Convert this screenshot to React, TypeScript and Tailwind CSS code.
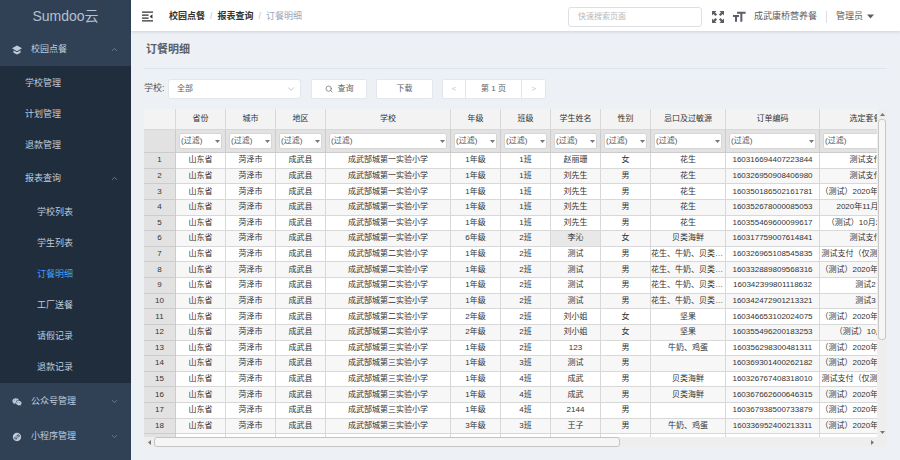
import { useState } from 'react';
import clsx from 'clsx';
import { ChevronDown, ChevronUp, Search } from 'lucide-react';
import { MdFormatSize } from 'react-icons/md';
import { RiMiniProgramFill, RiWechatFill } from 'react-icons/ri';

const managementLinks = ['学校管理', '计划管理', '退款管理'];
const reportLinks = ['学校列表', '学生列表', '订餐明细', '工厂送餐', '请假记录', '退款记录'];

const columns = [
  { label: '省份', width: 'w-[50px]' },
  { label: '城市', width: 'w-[50px]' },
  { label: '地区', width: 'w-[50px]' },
  { label: '学校', width: 'w-[125px]' },
  { label: '年级', width: 'w-[50px]' },
  { label: '班级', width: 'w-[50px]' },
  { label: '学生姓名', width: 'w-[50px]' },
  { label: '性别', width: 'w-[50px]' },
  { label: '忌口及过敏源', width: 'w-[75px]' },
  { label: '订单编码', width: 'w-[94px]' },
  { label: '选定套餐', width: 'w-[92px]' },
];

const FIRST = '成武郜城第一实验小学';
const SECOND = '成武郜城第二实验小学';
const THIRD = '成武郜城第三实验小学';

// school, grade, class, student, gender, allergens, order number, meal
const orders = [
  [FIRST, '1年级', '1班', '赵丽珊', '女', '花生', '160316694407223844', '测试支付'],
  [FIRST, '1年级', '1班', '刘先生', '男', '花生', '160326950908406980', '测试支付'],
  [FIRST, '1年级', '1班', '刘先生', '男', '花生', '160350186502161781', '（测试）2020年11月套餐'],
  [FIRST, '1年级', '1班', '刘先生', '男', '花生', '160352678000085053', '2020年11月套餐'],
  [FIRST, '1年级', '1班', '刘先生', '男', '花生', '160355469600099617', '（测试）10月2日套餐'],
  [FIRST, '6年级', '2班', '李沁', '女', '贝类海鲜', '160317759007614841', '测试支付'],
  [SECOND, '1年级', '2班', '测试', '男', '花生、牛奶、贝类海鲜', '160326965108545835', '测试支付（仅测试使用）'],
  [SECOND, '1年级', '2班', '测试', '男', '花生、牛奶、贝类海鲜', '160332889809568316', '（测试）2020年11月套餐'],
  [SECOND, '1年级', '2班', '测试', '男', '花生、牛奶、贝类海鲜', '160342399801118632', '测试2'],
  [SECOND, '1年级', '2班', '测试', '男', '花生、牛奶、贝类海鲜', '160342472901213321', '测试3'],
  [SECOND, '2年级', '2班', '刘小姐', '女', '坚果', '160346653102024075', '（测试）2020年11月套餐'],
  [SECOND, '2年级', '2班', '刘小姐', '女', '坚果', '160355496200183253', '（测试）10月2日'],
  [THIRD, '1年级', '2班', '123', '男', '牛奶、鸡蛋', '160356298300481311', '（测试）2020年11月套餐'],
  [THIRD, '1年级', '3班', '测试', '男', '', '160369301400262182', '（测试）2020年11月套餐'],
  [THIRD, '1年级', '4班', '成武', '男', '贝类海鲜', '160326767408318010', '测试支付（仅测试使用）'],
  [THIRD, '1年级', '4班', '成武', '男', '贝类海鲜', '160367662600646315', '（测试）2020年11月套餐'],
  [THIRD, '1年级', '4班', '2144', '男', '', '160367938500733879', '（测试）2020年11月套餐'],
  [THIRD, '3年级', '3班', '王子', '男', '牛奶、鸡蛋', '160336952400213311', '（测试）2020年11月套餐'],
];

function SchoolIcon() {
  return (
    <svg viewBox="0 0 20 20" className="size-[10px]" fill="currentColor" aria-hidden="true">
      <path d="M10 1 0 6.500l10 6 10-6z" />
      <path d="M3 10.500v5l7 3.500 7-3.500v-5l-7 4z" />
    </svg>
  );
}

function FoldIcon() {
  return (
    <svg viewBox="0 0 20 20" className="size-[11px]" fill="currentColor" aria-hidden="true">
      <path d="M0 1h20v2H0zM0 6.500h12v2H0zM0 12h12v2H0zM0 17h20v2H0zM19 6v8l-5-4z" />
    </svg>
  );
}

function FullscreenIcon() {
  return (
    <svg viewBox="0 0 24 24" className="size-3" fill="currentColor" aria-hidden="true">
      <path d="M0 0h9L6.200 2.800l4 4-3.400 3.400-4-4L0 9z" />
      <path d="M24 0v9l-2.800-2.800-4 4-3.400-3.400 4-4L15 0z" />
      <path d="M0 24v-9l2.800 2.800 4-4 3.400 3.400-4 4L9 24z" />
      <path d="M24 24h-9l2.800-2.800-4-4 3.400-3.400 4 4L24 15z" />
    </svg>
  );
}

function Caret({ className }: { className?: string }) {
  return (
    <svg viewBox="0 0 10 6" className={className} fill="currentColor" aria-hidden="true">
      <path d="M0 0h10L5 6z" />
    </svg>
  );
}

function Sidebar({ active, onSelect }: { active: string; onSelect: (name: string) => void }) {
  const topItem = 'flex h-[35px] w-full items-center px-3 pt-[2px] text-left';
  const link = 'flex h-[31px] items-center pt-[2px]';

  return (
    <aside className="w-[131px] shrink-0 bg-[#304156] text-[9px] text-[#bfcbd9]">
      <div className="flex h-[31px] items-center justify-center text-sm text-[#b4c0cf]">Sumdoo云</div>
      <nav>
        <button type="button" className={topItem}>
          <SchoolIcon />
          <span className="ml-[9px] flex-1">校园点餐</span>
          <ChevronUp className="size-[9px] text-[#7d8998]" strokeWidth={2} />
        </button>
        <div className="bg-[#1f2d3d]">
          <ul className="pt-px">
            {managementLinks.map((name) => (
              <li key={name}>
                <a href="#" className={clsx(link, 'pl-[25px]')}>{name}</a>
              </li>
            ))}
          </ul>
          <button type="button" className="flex h-[35px] w-full items-center pl-[25px] pr-3 pt-[2px] text-left">
            <span className="flex-1">报表查询</span>
            <ChevronUp className="size-[9px] text-[#7d8998]" strokeWidth={2} />
          </button>
          <ul className="py-px">
            {reportLinks.map((name) => (
              <li key={name}>
                <a
                  href="#"
                  onClick={() => onSelect(name)}
                  className={clsx(link, 'pl-[37px]', name === active && 'text-[#409eff]')}
                >
                  {name}
                </a>
              </li>
            ))}
          </ul>
        </div>
        <button type="button" className={topItem}>
          <RiWechatFill className="size-[10px]" />
          <span className="ml-[9px] flex-1">公众号管理</span>
          <ChevronDown className="size-[9px] text-[#7d8998]" strokeWidth={2} />
        </button>
        <button type="button" className={topItem}>
          <RiMiniProgramFill className="size-[10px]" />
          <span className="ml-[9px] flex-1">小程序管理</span>
          <ChevronDown className="size-[9px] text-[#7d8998]" strokeWidth={2} />
        </button>
      </nav>
    </aside>
  );
}

function Header() {
  return (
    <header className="flex h-[31px] items-center bg-white pl-[11px] pr-[26px] pt-[2px] text-[9px] text-[#5a5e66] shadow-[0_1px_3px_rgba(0,21,41,0.14)]">
      <button type="button" aria-label="折叠菜单" className="text-[#303133]">
        <FoldIcon />
      </button>
      <nav className="ml-4 flex flex-1 items-center gap-[5px]">
        <a href="#" className="font-bold text-[#303133]">校园点餐</a>
        <span className="text-[#c0c4cc]">/</span>
        <a href="#" className="font-bold text-[#303133]">报表查询</a>
        <span className="text-[#c0c4cc]">/</span>
        <span className="text-[#97a8be]">订餐明细</span>
      </nav>
      <input
        type="search"
        aria-label="快速搜索页面"
        placeholder="快速搜索页面"
        className="h-5 w-[134px] rounded-[3px] border border-[#dcdfe6] px-[9px] text-[8px] outline-none placeholder:text-[#b4b8c0]"
      />
      <button type="button" aria-label="全屏" className="ml-[10px]">
        <FullscreenIcon />
      </button>
      <button type="button" aria-label="字号" className="ml-[7px]">
        <MdFormatSize className="size-4" />
      </button>
      <span className="ml-[7px]">成武康桥营养餐</span>
      <span className="ml-[9px] h-3 w-px bg-[#dcdfe6]" />
      <button type="button" className="ml-[9px] flex items-center gap-1">
        管理员
        <Caret className="h-[5px] w-[7px]" />
      </button>
    </header>
  );
}

function Toolbar() {
  const button = 'flex h-5 items-center justify-center border border-[#e3e6ec] bg-white text-[8px] text-[#606266]';

  return (
    <div className="flex items-center text-[8px]">
      <label htmlFor="school" className="w-6 whitespace-nowrap text-[9px] text-[#505358]">学校:</label>
      <div className="relative">
        <select
          id="school"
          className="h-5 w-[133px] appearance-none rounded-[3px] border border-[#e3e6ec] bg-white px-2 text-[#606266]"
        >
          <option>全部</option>
        </select>
        <ChevronDown className="pointer-events-none absolute right-[5px] top-[5px] size-[10px] text-[#b4b8c0]" />
      </div>
      <button type="button" className={clsx(button, 'ml-[10px] w-14 gap-[5px] rounded-[2px]')}>
        <Search className="size-2" />
        查询
      </button>
      <button type="button" className={clsx(button, 'ml-[9px] w-[57px] rounded-[2px]')}>下载</button>
      <div className="ml-[9px] flex">
        <button type="button" disabled className={clsx(button, 'w-6 rounded-l-[2px] text-[#c0c4cc]!')}>&lt;</button>
        <button type="button" className={clsx(button, '-ml-px w-[57px]')}>第 1 页</button>
        <button type="button" disabled className={clsx(button, '-ml-px w-[25px] rounded-r-[2px] text-[#c0c4cc]!')}>&gt;</button>
      </div>
    </div>
  );
}

function OrderTable() {
  return (
    <div className="rounded-[2px] bg-[#eeeeee] text-[8px] leading-[12px] text-[#333333]">
      <div className="flex">
        <div className="h-[328px] min-w-0 flex-1 overflow-hidden">
          <table className="h-[341px] w-[768px] table-fixed border-separate border-spacing-0">
            <thead>
              <tr className="h-[21px] bg-[#f3f3f3]">
                <th className="w-8 border-b border-r border-[#d8d8d8]" />
                {columns.map(({ label, width }) => (
                  <th key={label} className={clsx(width, 'border-b border-r border-[#d8d8d8] p-0 text-center font-normal')}>
                    {label}
                  </th>
                ))}
              </tr>
              <tr className="h-[23px] bg-[#e2e2e2]">
                <th className="border-b border-r border-[#cccccc]" />
                {columns.map(({ label }) => (
                  <th key={label} className="border-b border-r border-[#cccccc] px-[3px] py-0 font-normal">
                    <div className="relative">
                      <select
                        aria-label={label}
                        className="block h-4 w-full appearance-none rounded-[2px] border border-[#d6d6d6] bg-white pl-px text-[#555555]"
                      >
                        <option>(过滤)</option>
                      </select>
                      <Caret className="pointer-events-none absolute right-[2px] top-[7px] h-[3px] w-[5px] text-[#777777]" />
                    </div>
                  </th>
                ))}
              </tr>
            </thead>
            <tbody>
              {orders.map((order, i) => (
                <tr key={order[6]} className={i % 2 ? 'bg-[#f7f7f7]' : 'bg-white'}>
                  <th className="border-b border-r border-[#cccccc] bg-[#e2e2e2] p-0 text-center font-normal">{i + 1}</th>
                  {['山东省', '菏泽市', '成武县', ...order].map((value, j) => (
                    <td
                      key={j}
                      lang={j === 10 ? 'zh-TW' : undefined}
                      className={clsx(
                        'truncate border-b border-r border-[#d8d8d8] p-0 text-center',
                        j === 10 && "font-['Liberation_Sans','Noto_Sans_CJK_TC',sans-serif]",
                        value === '李沁' && 'bg-[#e8e8e8]',
                      )}
                    >
                      {value}
                    </td>
                  ))}
                </tr>
              ))}
              <tr className="bg-white">
                <th className="border-b border-r border-[#cccccc] bg-[#e2e2e2] p-0">&nbsp;</th>
                {columns.map(({ label }) => (
                  <td key={label} className="border-b border-r border-[#d8d8d8] p-0" />
                ))}
              </tr>
            </tbody>
          </table>
        </div>
        <div className="flex w-[10px] shrink-0 flex-col items-center bg-[#eeeeee] text-[#777777]">
          <div className="flex h-[10px] items-center">
            <Caret className="h-[3px] w-[5px] rotate-180" />
          </div>
          <div className="min-h-0 w-2 flex-[220] rounded-[3px] border border-[#c8c8c8] bg-[#f5f5f5]" />
          <div className="flex-[88]" />
          <div className="flex h-[10px] items-center">
            <Caret className="h-[3px] w-[5px]" />
          </div>
        </div>
      </div>
      <div className="flex h-[10px] items-center pr-[10px] text-[#777777]">
        <div className="flex w-[10px] justify-center">
          <Caret className="h-[3px] w-[5px] rotate-90" />
        </div>
        <div className="h-[10px] flex-[465] rounded-[3px] border border-[#c4c4c4] bg-[#f5f5f5]" />
        <div className="flex-[248]" />
        <div className="flex w-[10px] justify-center">
          <Caret className="h-[3px] w-[5px] -rotate-90" />
        </div>
      </div>
    </div>
  );
}

export default function App() {
  const [active, setActive] = useState('订餐明细');

  return (
    <div className="flex min-h-screen bg-[#edf1f6] font-['Liberation_Sans','Noto_Sans_CJK_SC',sans-serif]">
      <Sidebar active={active} onSelect={setActive} />
      <div className="min-w-0 flex-1">
        <Header />
        <main className="px-[13px] pb-3">
          <h1 className="flex h-[38px] items-center border-b border-[#dfe5ec] pl-[2px] text-[11px] font-bold text-[#5a5e66]">
            {active}
          </h1>
          <div className="py-[10px]">
            <Toolbar />
          </div>
          <OrderTable />
        </main>
      </div>
    </div>
  );
}
